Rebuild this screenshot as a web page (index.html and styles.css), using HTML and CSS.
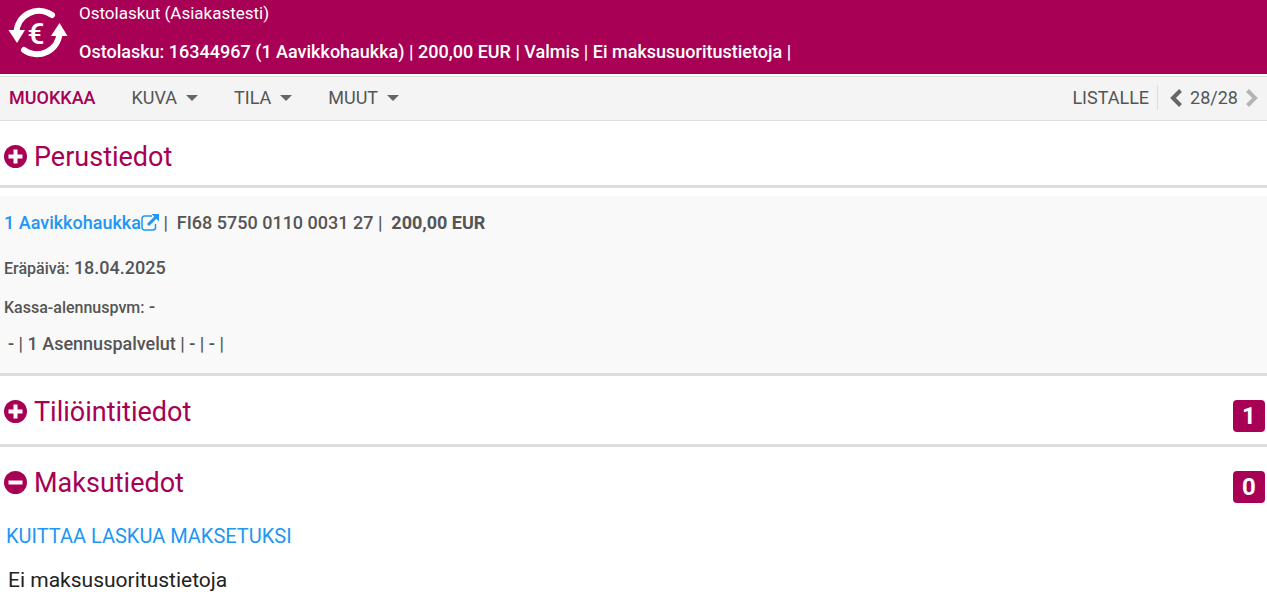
FILE: index.html
```html
<!DOCTYPE html>
<html lang="fi">
<head>
    <meta charset="UTF-8">
    <meta name="viewport" content="width=device-width, initial-scale=1.0">
    <title>Ostolaskut</title>
    <link rel="stylesheet" href="styles.css">
</head>
<body>
    <header class="header">
        <svg class="header-icon" viewBox="0 0 60 56" aria-hidden="true">
            <path d="M44 10A22.500 22.500 0 0 0 8.500 28" fill="none" stroke="#fff" stroke-width="6" stroke-linecap="round"/>
            <path d="M0.500 25h16.500l-8 13z" fill="#fff"/>
            <path d="M16 45A22.500 22.500 0 0 0 51.500 28" fill="none" stroke="#fff" stroke-width="6" stroke-linecap="round"/>
            <path d="M43 31h16.500l-8-13z" fill="#fff"/>
            <text x="28" y="39" class="header-euro" text-anchor="middle">€</text>
        </svg>
        <div class="header-text">
            <p>Ostolaskut (Asiakastesti)</p>
            <h1>Ostolasku: 16344967 (1 Aavikkohaukka) | 200,00 EUR | Valmis | Ei maksusuoritustietoja |</h1>
        </div>
    </header>

    <nav class="toolbar">
        <div class="menu">
            <button type="button" class="menu-btn active">MUOKKAA</button>
            <button type="button" class="menu-btn">KUVA <span class="caret"></span></button>
            <button type="button" class="menu-btn">TILA <span class="caret"></span></button>
            <button type="button" class="menu-btn">MUUT <span class="caret"></span></button>
        </div>
        <div class="pager">
            <a href="#" class="list-link">LISTALLE</a>
            <button type="button" class="pager-btn" aria-label="Edellinen">
                <svg viewBox="0 0 12 18"><path d="M10.500 1.500L3 9l7.500 7.500"/></svg>
            </button>
            <span>28/28</span>
            <button type="button" class="pager-btn" aria-label="Seuraava" disabled>
                <svg viewBox="0 0 12 18"><path d="M1.500 1.500L9 9l-7.500 7.500"/></svg>
            </button>
        </div>
    </nav>

    <main>
        <section class="section">
            <h2>
                <button type="button" class="section-toggle">
                    <svg viewBox="0 0 24 24"><circle cx="11.500" cy="11.500" r="11.500"/><path d="M4.500 11.500h14M11.500 4.500v14"/></svg>
                    Perustiedot
                </button>
            </h2>
        </section>

        <div class="summary">
            <p class="summary-main">
                <a href="#">1 Aavikkohaukka<svg viewBox="0 0 18 17"><path class="box" d="M11 2H3.500A2.500 2.500 0 0 0 1 4.500v9A2.500 2.500 0 0 0 3.500 16h8.500a2.500 2.500 0 0 0 2.500-2.500V10"/><path class="arrow" d="M7 11l7.500-7.500"/><path class="tip" d="M10.500 0H18v7.500z"/></svg></a>
                <span>|&nbsp; FI68 5750 0110 0031 27 |&nbsp; <strong>200,00 EUR</strong></span>
            </p>
            <p class="summary-date"><span class="label">Eräpäivä:</span> 18.04.2025</p>
            <p class="summary-discount"><span class="label">Kassa-alennuspvm:</span> -</p>
            <p class="summary-service">- | 1 Asennuspalvelut | - | - |</p>
        </div>

        <section class="section">
            <h2>
                <button type="button" class="section-toggle">
                    <svg viewBox="0 0 24 24"><circle cx="11.500" cy="11.500" r="11.500"/><path d="M4.500 11.500h14M11.500 4.500v14"/></svg>
                    Tiliöintitiedot
                </button>
            </h2>
            <span class="badge">1</span>
        </section>

        <section class="section open">
            <h2>
                <button type="button" class="section-toggle">
                    <svg viewBox="0 0 24 24"><circle cx="11.500" cy="11.500" r="11.500"/><path d="M4.500 11.500h14"/></svg>
                    Maksutiedot
                </button>
            </h2>
            <span class="badge">0</span>
        </section>
        <div class="payments">
            <a href="#">KUITTAA LASKUA MAKSETUKSI</a>
            <p>Ei maksusuoritustietoja</p>
        </div>
    </main>
</body>
</html>
```
FILE: styles.css
```css
* {
    margin: 0;
    padding: 0;
    box-sizing: border-box;
}

body {
    font-family: Roboto, "Liberation Sans", sans-serif;
    font-size: 18px;
    color: #222;
    background: #fff;
}

button {
    font: inherit;
    color: inherit;
    background: none;
    border: none;
    cursor: pointer;
}

a {
    color: #2196f3;
    text-decoration: none;
}

/* Header */
.header {
    display: flex;
    gap: 11px;
    padding: 4px 8px 10px;
    background: #a80054;
    color: #fff;
}

.header-icon {
    width: 60px;
    height: 56px;
    margin-top: 1px;
    flex: none;
}

.header-euro {
    font-size: 30px;
    font-weight: 500;
    fill: #fff;
}

.header-text p {
    font-size: 17px;
    line-height: 18px;
}

.header-text h1 {
    font-size: 18px;
    font-weight: 500;
    line-height: 24px;
    margin-top: 18px;
}

/* Toolbar */
.toolbar {
    display: flex;
    justify-content: space-between;
    align-items: center;
    margin-top: 2px;
    padding: 8px 9px 10px;
    background: #f4f4f4;
    border-top: 1px solid #ddd;
    border-bottom: 1px solid #ddd;
    color: #555;
}

.menu {
    display: flex;
    gap: 36px;
}

.menu-btn {
    display: flex;
    align-items: center;
    gap: 9px;
}

.menu-btn.active {
    color: #a80054;
    font-weight: 500;
}

.caret {
    border: 6px solid transparent;
    border-top-color: #666;
    border-bottom: 0;
}

.pager {
    display: flex;
    align-items: center;
    gap: 8px;
}

.list-link {
    color: inherit;
    line-height: 25px;
    margin-right: 4px;
    padding-right: 8px;
    border-right: 1px solid #ddd;
}

.pager-btn {
    display: flex;
}

.pager-btn svg {
    width: 12px;
    height: 18px;
    fill: none;
    stroke: #666;
    stroke-width: 4;
}

.pager-btn:disabled svg {
    stroke: #b5b5b5;
}

/* Sections */
.section {
    display: flex;
    justify-content: space-between;
    padding: 18px 2px 10px 4px;
    border-bottom: 3px solid #ddd;
}

.section.open {
    border-bottom: none;
}

.section h2 {
    font-size: 27px;
    font-weight: 400;
    line-height: 36px;
    color: #a80054;
}

.section-toggle {
    display: flex;
    align-items: center;
    gap: 6px;
}

.section-toggle svg {
    width: 24px;
    height: 24px;
    fill: #a80054;
    stroke: #fff;
}

.section-toggle circle {
    stroke: none;
}

.section-toggle path {
    stroke-width: 4;
}

.badge {
    width: 32px;
    height: 32px;
    margin: 6px 0 2px;
    border-radius: 4px;
    background: #a80054;
    color: #fff;
    font-size: 24px;
    font-weight: 700;
    line-height: 32px;
    text-align: center;
}

/* Summary */
.summary {
    margin-top: 8px;
    padding: 14px 4px 16px;
    background: #f9f9f9;
    border-bottom: 3px solid #ddd;
    color: #555;
    font-weight: 500;
    line-height: 26px;
}

.summary-main svg {
    width: 18px;
    height: 17px;
    fill: none;
    stroke: #2196f3;
    vertical-align: -2px;
}

.summary-main .box {
    stroke-width: 1.5;
}

.summary-main .arrow {
    stroke-width: 3;
}

.summary-main .tip {
    fill: #2196f3;
    stroke: none;
}

.summary-date {
    margin-top: 19px;
}

.summary-discount {
    margin-top: 12px;
}

.summary-service {
    margin-top: 10px;
    padding-left: 4px;
}

.label {
    font-size: 16px;
}

/* Payments */
.payments {
    padding: 6px;
    font-size: 21px;
    line-height: 30px;
}

.payments a {
    font-size: 20px;
}

.payments p {
    margin-top: 14px;
    padding-left: 2px;
}
```
